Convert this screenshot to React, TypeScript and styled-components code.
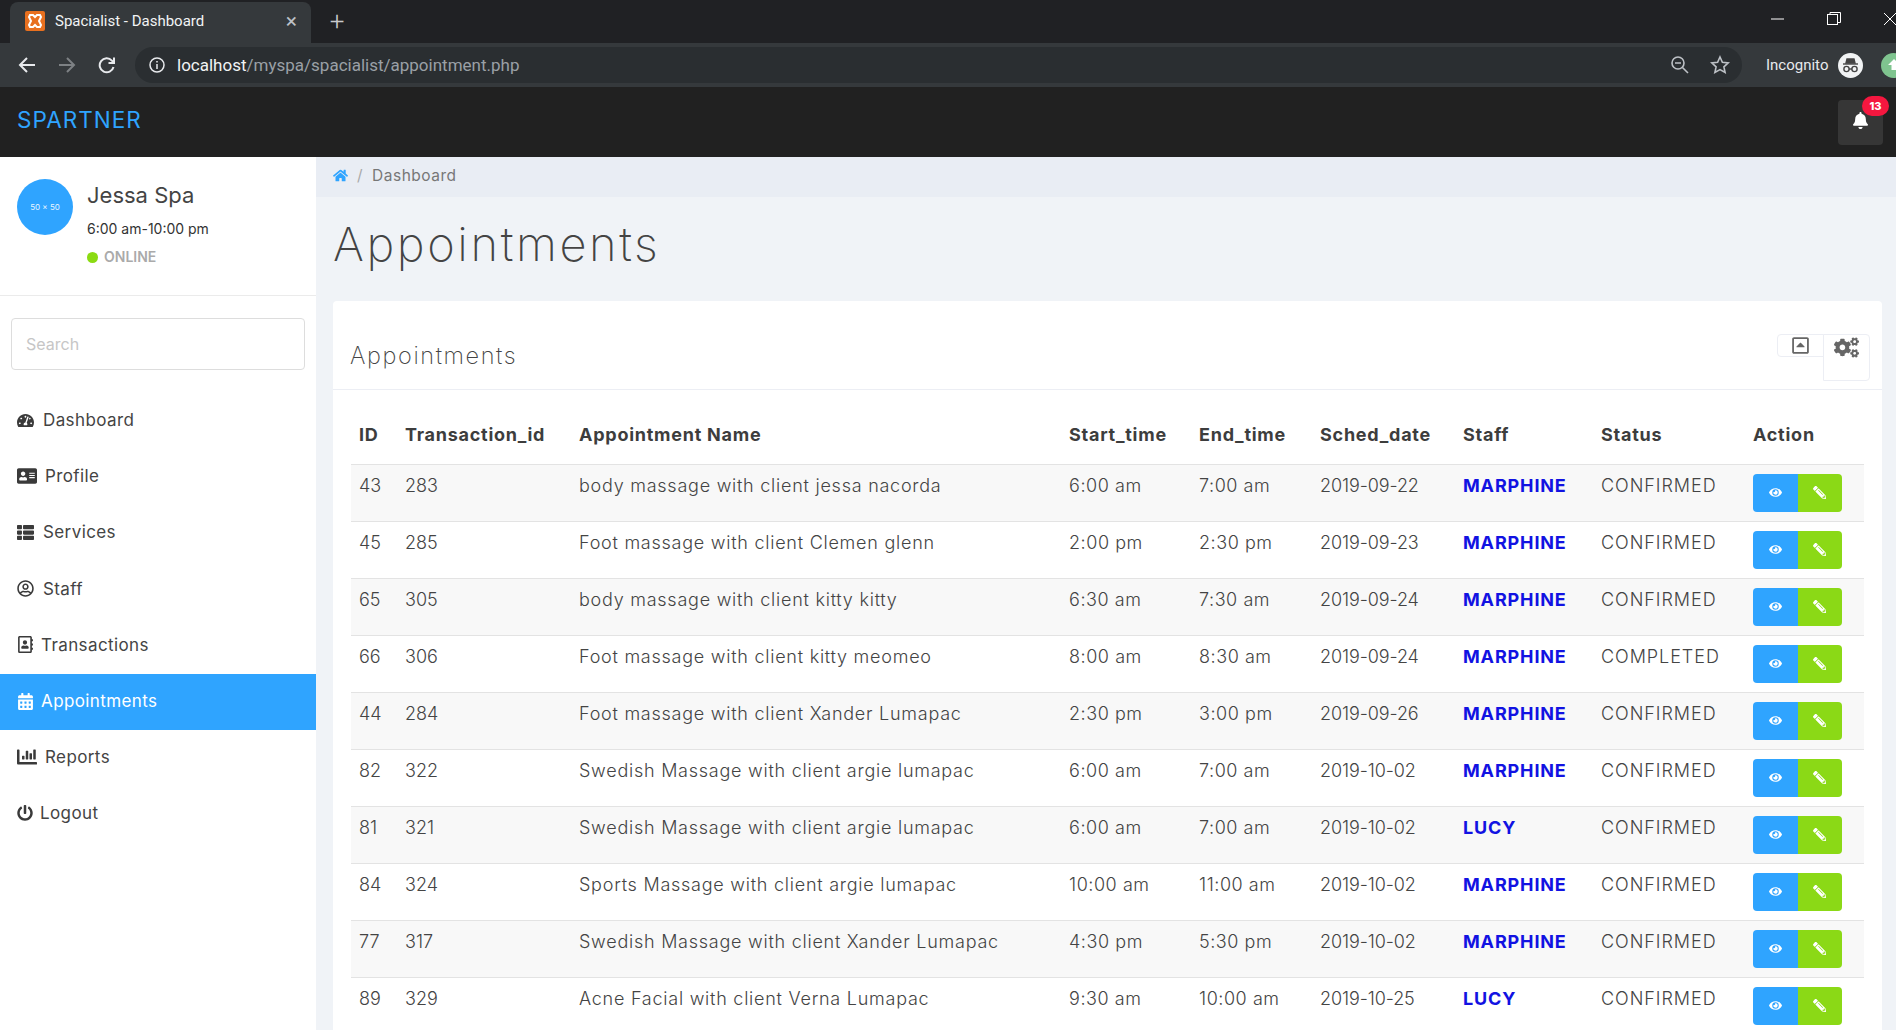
import React from "react";
import styled, { createGlobalStyle } from "styled-components";
import {
  FaTachometerAlt,
  FaAddressCard,
  FaThList,
  FaRegUserCircle,
  FaRegAddressBook,
  FaCalendarAlt,
  FaChartBar,
  FaPowerOff,
  FaHome,
  FaEye,
  FaPencilAlt,
  FaCogs,
  FaRegCaretSquareUp,
  FaBell,
} from "react-icons/fa";

const GlobalStyle = createGlobalStyle`
  html, body {
    margin: 0;
    height: 100%;
    overflow: hidden;
    background: #f0f3f7;
    font-family: "Inter", "Noto Sans", sans-serif;
    color: #444;
  }
  * { box-sizing: border-box; }
`;

const Page = styled.div`
  height: 1030px;
  display: flex;
  flex-direction: column;
  overflow: hidden;
`;

/* browser chrome */
const TabStrip = styled.div`
  height: 43px;
  background: #202124;
  display: flex;
  align-items: flex-end;
  padding-left: 10px;
  color: #fff;
  font-family: "Roboto", sans-serif;
`;
const Tab = styled.div`
  width: 301px;
  height: 41px;
  background: #35393c;
  border-radius: 8px 8px 0 0;
  display: flex;
  align-items: center;
  padding: 0 14px 3px 15px;
  font-size: 15px;
  gap: 10px;
`;
const TabTitle = styled.span`
  flex: 1;
  color: #f1f3f4;
`;
const TabClose = styled.span`
  font-size: 21px;
  color: #bdc1c6;
  line-height: 1;
`;
const NewTab = styled.div`
  width: 52px;
  text-align: center;
  align-self: center;
  font-size: 26px;
  font-weight: 300;
  color: #c8cacc;
  padding-bottom: 2px;
  line-height: 1;
`;
const WindowControls = styled.div`
  margin-left: auto;
  align-self: flex-start;
  height: 37px;
  display: flex;
  align-items: center;
  gap: 42px;
  margin-right: -1px;
`;
const ToolBar = styled.div`
  height: 44px;
  background: #35393c;
  display: flex;
  align-items: center;
  padding: 0 0 0 18px;
  color: #e8eaed;
  font-family: "Roboto", sans-serif;
  overflow: hidden;
`;
const NavIcons = styled.div`
  display: flex;
  gap: 22px;
  align-items: center;
  width: 117px;
  flex-shrink: 0;
`;
const Omnibox = styled.div`
  width: 1607px;
  height: 36px;
  border-radius: 18px;
  background: #2a2e31;
  padding: 0 12px 0 14px;
  display: flex;
  align-items: center;
  gap: 12px;
  font-size: 17px;
  flex-shrink: 0;
`;
const UrlHost = styled.span`
  color: #f1f3f4;
`;
const UrlPath = styled.span`
  color: #9aa0a6;
`;
const OmniEnd = styled.div`
  margin-left: auto;
  display: flex;
  align-items: center;
  gap: 20px;
`;
const IncognitoLabel = styled.span`
  margin-left: 24px;
  font-size: 15px;
  white-space: nowrap;
  color: #e8eaed;
`;
const IncognitoBadge = styled.span`
  flex-shrink: 0;
  margin-left: 10px;
  width: 25px;
  height: 25px;
  border-radius: 50%;
  background: #f1f3f4;
  display: flex;
  align-items: center;
  justify-content: center;
`;
const ExtensionDot = styled.span`
  flex-shrink: 0;
  margin-left: 18px;
  width: 25px;
  height: 25px;
  border-radius: 50%;
  background: #7fc48f;
  display: flex;
  align-items: center;
  justify-content: center;
`;

/* app */
const TopBar = styled.header`
  height: 70px;
  background: #212121;
  display: flex;
  align-items: center;
  justify-content: space-between;
  padding: 0 13px 5px 17px;
`;
const Brand = styled.div`
  color: #2fa4ff;
  font-size: 22.5px;
  font-weight: 400;
  letter-spacing: 1px;
`;
const BellBox = styled.div`
  position: relative;
  width: 45px;
  height: 45px;
  border-radius: 4px;
  background: #363636;
  color: #fff;
  display: flex;
  align-items: center;
  justify-content: center;
  font-size: 17px;
  padding-bottom: 4px;
  margin-top: 5px;
`;
const BellCount = styled.span`
  position: absolute;
  top: -4px;
  right: -6px;
  width: 27px;
  height: 20px;
  border-radius: 10px;
  background: #f5173f;
  font-size: 11px;
  font-weight: 800;
  display: flex;
  align-items: center;
  justify-content: center;
`;
const Body = styled.div`
  flex: 1;
  display: flex;
  min-height: 0;
`;
const Sidebar = styled.aside`
  width: 316px;
  flex-shrink: 0;
  background: #fff;
`;
const ProfileBlock = styled.div`
  height: 139px;
  border-bottom: 1px solid #ebebeb;
  padding: 22px 17px 0;
  display: flex;
  gap: 14px;
`;
const Avatar = styled.div`
  width: 56px;
  height: 56px;
  border-radius: 50%;
  background: #2fa4ff;
  color: #e8f4ff;
  font-size: 8px;
  display: flex;
  align-items: center;
  justify-content: center;
  flex-shrink: 0;
`;
const ProfileText = styled.div`
  display: flex;
  flex-direction: column;
`;
const ProfileName = styled.div`
  font-size: 22px;
  line-height: 30px;
  margin-top: 1px;
  color: #444;
`;
const Hours = styled.div`
  font-size: 14px;
  line-height: 20px;
  margin-top: 9px;
  color: #333;
`;
const OnlineRow = styled.div`
  display: flex;
  align-items: center;
  gap: 6px;
  margin-top: 9px;
  font-size: 14px;
  line-height: 18px;
  font-weight: 600;
  color: #aaa;
`;
const OnlineDot = styled.span`
  width: 11px;
  height: 11px;
  border-radius: 50%;
  background: #8bdb12;
`;
const SearchWrap = styled.div`
  padding: 22px 11px 0;
`;
const SearchInput = styled.input`
  display: block;
  width: 100%;
  height: 52px;
  border: 1px solid #ddd;
  border-radius: 4px;
  padding: 0 14px;
  font: 400 16px "Inter", sans-serif;
  outline: none;
  &::placeholder {
    color: #c6c6c6;
  }
`;
const Menu = styled.nav`
  margin-top: 23px;
`;
const MenuItem = styled.div<{ $active?: boolean; $gap: number; $icon: number }>`
  height: 56.2px;
  display: flex;
  align-items: center;
  padding: 0 0 2px 17px;
  gap: ${(p) => p.$gap}px;
  font-size: 17px;
  letter-spacing: 0.4px;
  background: ${(p) => (p.$active ? "#2fa4ff" : "transparent")};
  color: ${(p) => (p.$active ? "#fff" : "#444")};
  svg {
    color: ${(p) => (p.$active ? "#fff" : "#3a3a3a")};
    width: ${(p) => p.$icon}px;
    height: ${(p) => p.$icon}px;
    flex-shrink: 0;
  }
`;
const Main = styled.main`
  flex: 1;
  min-width: 0;
`;
const Breadcrumb = styled.div`
  height: 40px;
  background: #e9edf4;
  display: flex;
  align-items: center;
  padding: 0 0 3px 17px;
  font-size: 15.5px;
  letter-spacing: 0.5px;
  color: #777;
  gap: 9px;
  svg {
    color: #2fa4ff;
    font-size: 15px;
  }
`;
const Slash = styled.span`
  color: #aaa;
`;
const PageTitle = styled.h1`
  margin: 0;
  padding: 18px 0 0 17px;
  height: 104px;
  font-size: 47px;
  line-height: 58px;
  font-weight: 200;
  letter-spacing: 2.6px;
  color: #444;
`;
const Card = styled.section`
  margin: 0 14px 0 17px;
  background: #fff;
  border-radius: 4px;
  height: 800px;
`;
const CardHeader = styled.div`
  position: relative;
  height: 89px;
  border-bottom: 1px solid #eceef4;
  padding: 40px 0 0 17px;
`;
const CardTitle = styled.h2`
  margin: 0;
  font-size: 23.5px;
  line-height: 30px;
  font-weight: 200;
  letter-spacing: 1.6px;
  color: #444;
`;
const Widgets = styled.div`
  position: absolute;
  top: 33px;
  right: 12px;
  display: flex;
  align-items: flex-start;
  color: #666;
`;
const WidgetBtn = styled.div<{ $tall?: boolean }>`
  width: 47px;
  height: ${(p) => (p.$tall ? 47 : 23)}px;
  border: 1px solid #eceef4;
  border-radius: ${(p) => (p.$tall ? "0 4px 4px 0" : "4px 0 0 4px")};
  display: flex;
  justify-content: center;
  align-items: ${(p) => (p.$tall ? "flex-start" : "center")};
  font-size: ${(p) => (p.$tall ? 25 : 19)}px;
  margin-right: ${(p) => (p.$tall ? 0 : -1)}px;
  line-height: 1;
`;
const TableWrap = styled.div`
  padding: 0 18px;
`;
const Table = styled.table`
  width: 100%;
  border-collapse: collapse;
  table-layout: fixed;
  font-size: 18px;
`;
const HeadCell = styled.th`
  height: 74px;
  padding: 16px 8px 0;
  text-align: left;
  font-weight: 700;
  font-size: 18px;
  letter-spacing: 0.75px;
  color: #3d3d3d;
  white-space: nowrap;
`;
const Row = styled.tr<{ $odd: boolean }>`
  height: 57px;
  background: ${(p) => (p.$odd ? "#f8f8f8" : "#fff")};
  border-top: 1px solid #e3e3e3;
`;
const Cell = styled.td<{ $track: number }>`
  padding: 8px 8px 0;
  vertical-align: top;
  font-weight: 300;
  line-height: 26px;
  letter-spacing: ${(p) => p.$track}px;
  color: #444;
  white-space: nowrap;
`;
const StaffCell = styled.td`
  padding: 8px 8px 0;
  vertical-align: top;
  line-height: 26px;
  font-weight: 700;
  letter-spacing: 0.85px;
  color: #1212e2;
`;
const ActionCell = styled.td`
  padding: 9px 8px 0;
  vertical-align: top;
`;
const ActionGroup = styled.div`
  display: flex;
  width: 89px;
  height: 38px;
  border-radius: 4px;
  overflow: hidden;
`;
const ActionBtn = styled.div<{ $color: string; $flip?: boolean }>`
  flex: 1;
  background: ${(p) => p.$color};
  color: #fff;
  font-size: 13px;
  display: flex;
  align-items: center;
  justify-content: center;
  svg {
    transform: ${(p) => (p.$flip ? "scaleX(-1)" : "none")};
  }
`;

const menu = [
  { label: "Dashboard", icon: <FaTachometerAlt />, size: 17, gap: 9 },
  { label: "Profile", icon: <FaAddressCard />, size: 20, gap: 8 },
  { label: "Services", icon: <FaThList />, size: 17, gap: 9 },
  { label: "Staff", icon: <FaRegUserCircle />, size: 17, gap: 9 },
  { label: "Transactions", icon: <FaRegAddressBook />, size: 17, gap: 7 },
  { label: "Appointments", icon: <FaCalendarAlt />, size: 17, gap: 7, active: true },
  { label: "Reports", icon: <FaChartBar />, size: 20, gap: 8 },
  { label: "Logout", icon: <FaPowerOff />, size: 16, gap: 7 },
];

const columns = [
  ["ID", 46],
  ["Transaction_id", 174],
  ["Appointment Name", 490],
  ["Start_time", 130],
  ["End_time", 121],
  ["Sched_date", 143],
  ["Staff", 138],
  ["Status", 152],
  ["Action", 119],
] as const;

const rows = [
  ["43", "283", "body massage with client jessa nacorda", "6:00 am", "7:00 am", "2019-09-22", "MARPHINE", "CONFIRMED"],
  ["45", "285", "Foot massage with client Clemen glenn", "2:00 pm", "2:30 pm", "2019-09-23", "MARPHINE", "CONFIRMED"],
  ["65", "305", "body massage with client kitty kitty", "6:30 am", "7:30 am", "2019-09-24", "MARPHINE", "CONFIRMED"],
  ["66", "306", "Foot massage with client kitty meomeo", "8:00 am", "8:30 am", "2019-09-24", "MARPHINE", "COMPLETED"],
  ["44", "284", "Foot massage with client Xander Lumapac", "2:30 pm", "3:00 pm", "2019-09-26", "MARPHINE", "CONFIRMED"],
  ["82", "322", "Swedish Massage with client argie lumapac", "6:00 am", "7:00 am", "2019-10-02", "MARPHINE", "CONFIRMED"],
  ["81", "321", "Swedish Massage with client argie lumapac", "6:00 am", "7:00 am", "2019-10-02", "LUCY", "CONFIRMED"],
  ["84", "324", "Sports Massage with client argie lumapac", "10:00 am", "11:00 am", "2019-10-02", "MARPHINE", "CONFIRMED"],
  ["77", "317", "Swedish Massage with client Xander Lumapac", "4:30 pm", "5:30 pm", "2019-10-02", "MARPHINE", "CONFIRMED"],
  ["89", "329", "Acne Facial with client Verna Lumapac", "9:30 am", "10:00 am", "2019-10-25", "LUCY", "CONFIRMED"],
];

const Favicon = () => (
  <svg width="20" height="20" viewBox="0 0 20 20">
    <rect width="20" height="20" rx="2" fill="#e8701f" />
    <path
      d="M5 4h3l2 2 2-2h3l1 2-2 4 2 4-1 2h-3l-2-2-2 2H5l-1-2 2-4-2-4z"
      fill="none"
      stroke="#fff"
      strokeWidth="2"
    />
  </svg>
);

const Arrow = ({ dir, color }: { dir: "left" | "right"; color: string }) => (
  <svg width="18" height="18" viewBox="0 0 18 18" fill="none" stroke={color} strokeWidth="2">
    {dir === "left" ? <path d="M17 9H2M9 2 2 9l7 7" /> : <path d="M1 9h15M9 2l7 7-7 7" />}
  </svg>
);

export default function App() {
  return (
    <Page>
      <GlobalStyle />
      <TabStrip>
        <Tab>
          <Favicon />
          <TabTitle>Spacialist - Dashboard</TabTitle>
          <TabClose>×</TabClose>
        </Tab>
        <NewTab>+</NewTab>
        <WindowControls>
          <svg width="14" height="14" viewBox="0 0 14 14" stroke="#fff" fill="none">
            <path d="M0 7h13" />
          </svg>
          <svg width="14" height="14" viewBox="0 0 14 14" stroke="#fff" fill="none">
            <rect x="0.5" y="2.5" width="10" height="10" />
            <path d="M3 2.5V.5h10.5v10h-3" />
          </svg>
          <svg width="14" height="14" viewBox="0 0 14 14" stroke="#fff" fill="none">
            <path d="M1 1l12 12M13 1 1 13" />
          </svg>
        </WindowControls>
      </TabStrip>
      <ToolBar>
        <NavIcons>
          <Arrow dir="left" color="#e8eaed" />
          <Arrow dir="right" color="#7d8184" />
          <svg width="18" height="18" viewBox="0 0 18 18" fill="none" stroke="#e8eaed" strokeWidth="2">
            <path d="M15.5 11a7 7 0 1 1-1.6-6.4L16 7" />
            <path d="M16 1.5V7h-5.5" />
          </svg>
        </NavIcons>
        <Omnibox>
          <svg width="16" height="16" viewBox="0 0 16 16" fill="none" stroke="#e8eaed" strokeWidth="1.5">
            <circle cx="8" cy="8" r="7" />
            <path d="M8 7v5M8 4v1.6" />
          </svg>
          <span>
            <UrlHost>localhost</UrlHost>
            <UrlPath>/myspa/spacialist/appointment.php</UrlPath>
          </span>
          <OmniEnd>
            <svg width="20" height="20" viewBox="0 0 20 20" fill="none" stroke="#bdc1c6" strokeWidth="1.6">
              <circle cx="8" cy="8" r="6" />
              <path d="M5 8h6M12.5 12.5 18 18" />
            </svg>
            <svg width="20" height="20" viewBox="0 0 20 20" fill="none" stroke="#bdc1c6" strokeWidth="1.6">
              <path d="m10 2 2.4 5.3 5.8.6-4.3 3.9 1.2 5.7-5.1-2.9-5.1 2.9 1.2-5.7L1.8 7.9l5.8-.6z" />
            </svg>
          </OmniEnd>
        </Omnibox>
        <IncognitoLabel>Incognito</IncognitoLabel>
        <IncognitoBadge>
          <svg width="19" height="17" viewBox="0 0 19 17" fill="none" stroke="#444" strokeWidth="1.4">
            <path d="M5 6l1-4h7l1 4z" fill="#444" />
            <path d="M2 7h15" />
            <circle cx="5.5" cy="12" r="2.6" />
            <circle cx="13.5" cy="12" r="2.6" />
            <path d="M8 12h3" />
          </svg>
        </IncognitoBadge>
        <ExtensionDot>
          <svg width="14" height="14" viewBox="0 0 14 14" fill="#fff">
            <path d="M7 1l6 6H9.5v5h-5V7H1z" />
          </svg>
        </ExtensionDot>
      </ToolBar>
      <TopBar>
        <Brand>SPARTNER</Brand>
        <BellBox>
          <FaBell />
          <BellCount>13</BellCount>
        </BellBox>
      </TopBar>
      <Body>
        <Sidebar>
          <ProfileBlock>
            <Avatar>50 x 50</Avatar>
            <ProfileText>
              <ProfileName>Jessa Spa</ProfileName>
              <Hours>6:00 am-10:00 pm</Hours>
              <OnlineRow>
                <OnlineDot />
                ONLINE
              </OnlineRow>
            </ProfileText>
          </ProfileBlock>
          <SearchWrap>
            <SearchInput placeholder="Search" />
          </SearchWrap>
          <Menu>
            {menu.map((m) => (
              <MenuItem key={m.label} $active={m.active} $gap={m.gap} $icon={m.size}>
                {m.icon}
                {m.label}
              </MenuItem>
            ))}
          </Menu>
        </Sidebar>
        <Main>
          <Breadcrumb>
            <FaHome />
            <Slash>/</Slash>
            Dashboard
          </Breadcrumb>
          <PageTitle>Appointments</PageTitle>
          <Card>
            <CardHeader>
              <CardTitle>Appointments</CardTitle>
              <Widgets>
                <WidgetBtn>
                  <FaRegCaretSquareUp />
                </WidgetBtn>
                <WidgetBtn $tall>
                  <FaCogs />
                </WidgetBtn>
              </Widgets>
            </CardHeader>
            <TableWrap>
              <Table>
                <colgroup>
                  {columns.map(([name, width]) => (
                    <col key={name} width={width} />
                  ))}
                </colgroup>
                <thead>
                  <tr>
                    {columns.map(([name]) => (
                      <HeadCell key={name}>{name}</HeadCell>
                    ))}
                  </tr>
                </thead>
                <tbody>
                  {rows.map((r, i) => (
                    <Row key={r[0]} $odd={i % 2 === 0}>
                      <Cell $track={0}>{r[0]}</Cell>
                      <Cell $track={0}>{r[1]}</Cell>
                      <Cell $track={0.75}>{r[2]}</Cell>
                      <Cell $track={0.55}>{r[3]}</Cell>
                      <Cell $track={0.55}>{r[4]}</Cell>
                      <Cell $track={-0.1}>{r[5]}</Cell>
                      <StaffCell>{r[6]}</StaffCell>
                      <Cell $track={0.95}>{r[7]}</Cell>
                      <ActionCell>
                        <ActionGroup>
                          <ActionBtn $color="#2fa4ff">
                            <FaEye />
                          </ActionBtn>
                          <ActionBtn $color="#8bd916" $flip>
                            <FaPencilAlt />
                          </ActionBtn>
                        </ActionGroup>
                      </ActionCell>
                    </Row>
                  ))}
                </tbody>
              </Table>
            </TableWrap>
          </Card>
        </Main>
      </Body>
    </Page>
  );
}
